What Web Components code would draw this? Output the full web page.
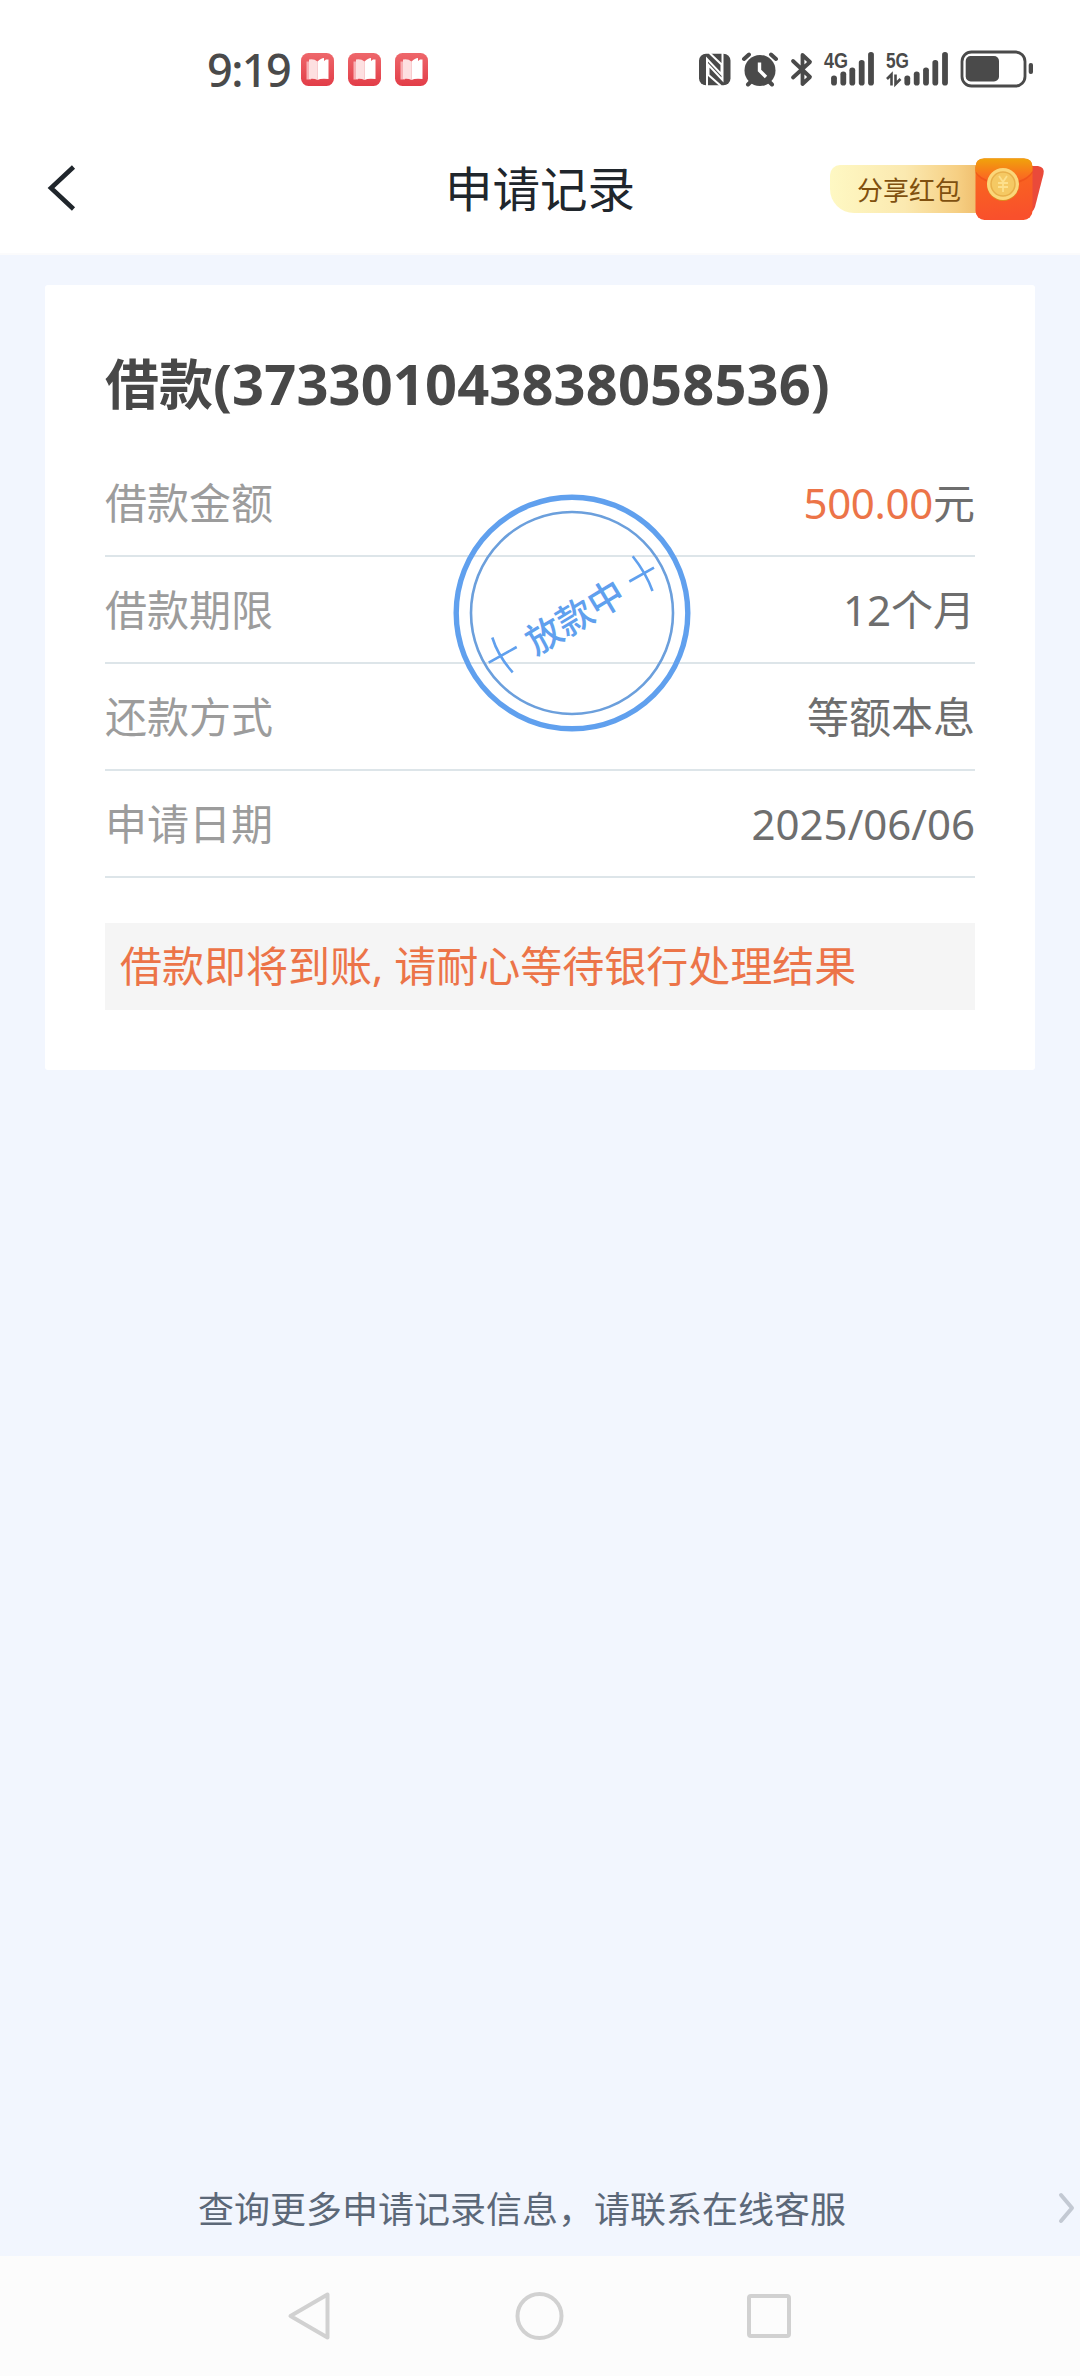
<!DOCTYPE html>
<html lang="zh-CN">
<head>
<meta charset="utf-8">
<meta name="viewport" content="width=device-width">
<title>申请记录</title>
<style>
html,body{margin:0;height:100%;background:#f2f6fe}
body{font-family:"Noto Sans","Noto Sans CJK SC",sans-serif}
</style>
</head>
<body>
<record-page></record-page>
<script>
const define = (name, html) => customElements.define(name, class extends HTMLElement {
  constructor() {
    super();
    const t = document.createElement('template');
    t.innerHTML = `<style>*{box-sizing:border-box}svg{display:block;flex:none}</style>` + html;
    this.attachShadow({mode: 'open'}).append(t.content.cloneNode(true));
  }
});

define('book-badge', `<style>:host{display:block;width:33px;height:33px}</style>
<svg width="33" height="33" viewBox="0 0 33 33">
<defs><linearGradient id="r" x2="0" y2="1"><stop stop-color="#ee676b"/><stop offset="1" stop-color="#e23d48"/></linearGradient></defs>
<rect width="33" height="33" rx="7.5" fill="url(#r)"/>
<path d="M5.500 8.500H10V26.500H5.500Z" fill="#f8b0b4"/><path d="M8 6.500Q13 5.500 16.500 8.500V27Q13 25 8 26Z" fill="#fde0e1"/>
<path d="M16.500 8.500Q20 5 23 5V8L25 6.500V6.500Q27 6.300 27.500 6.500V26Q20 25 16.500 27Z" fill="#fff"/>
</svg>`);

const bars = (xs) => xs.map((x, i) => {
  const y = [25.500, 21.500, 17.500, 10, 2][i];
  return `<rect x="${x - 2.900}" y="${y}" width="5.800" height="${35.500 - y}" rx="2.800"/>`;
}).join('');

define('status-bar', `<style>
:host{display:flex;height:120px;padding:50px 47px 0 207px;align-items:flex-start;color:#4a4a4a;background:#fff}
.time{font:500 45px/42px "Noto Sans",sans-serif;letter-spacing:-1.600px;width:94px;height:42px;margin-top:-1px;white-space:nowrap}
.badges{display:flex;gap:14px;margin-top:3px}
.tray{margin-left:auto;display:flex}
.signal{margin-top:-10px}
text{font:700 22px "Liberation Sans",sans-serif}
</style>
<div class="time">9:19</div>
<div class="badges"><book-badge></book-badge><book-badge></book-badge><book-badge></book-badge></div>
<div class="tray">
<svg width="44" height="40" fill="#4a4a4a"><rect x="9" y="3.700" width="31.500" height="31.500" rx="7"/><g fill="none" stroke="#fff" stroke-width="2"><path d="M17 36V9L31.500 24.500V14.500L19.500 3M32.500 3V30L18.500 15V25L31 36" stroke-linejoin="miter"/></g></svg>
<svg width="44" height="40"><g stroke="#4a4a4a" stroke-linecap="round"><path d="M10 9L15 4.500M42 9L37 4.500M14 34.500l4-4M38 34.500l-4-4" stroke-width="4"/></g><circle cx="26" cy="20.500" r="15.500" fill="#4a4a4a"/><path d="M25.500 12.500V20.500L32 27" fill="none" stroke="#fff" stroke-width="3.400"/></svg>
<svg width="40" height="40" fill="none" stroke="#4a4a4a" stroke-width="3.800" stroke-linejoin="round" stroke-linecap="round"><path d="M15 11L32 27L24.500 34V5L32 12L15 27.500"/></svg>
<svg class="signal" width="62" height="50" viewBox="0 -10 62 50" fill="#4a4a4a"><text x="6" y="18" textLength="24" lengthAdjust="spacingAndGlyphs">4G</text><g>${bars([16, 25.300, 34.300, 43.700, 53])}</g></svg>
<svg class="signal" width="72" height="50" viewBox="0 -10 72 50" fill="#4a4a4a"><text x="6" y="18" textLength="23" lengthAdjust="spacingAndGlyphs">5G</text><path d="M7 29L11.500 24.500V35.500M15.500 24.500V34L20.500 29" fill="none" stroke="#4a4a4a" stroke-width="2.600"/><g>${bars([27.300, 36.700, 46, 55.300, 65])}</g></svg>
<svg width="81" height="40"><rect x="10" y="2" width="63" height="34" rx="9.500" fill="none" stroke="#4a4a4a" stroke-width="2.800"/><rect x="13.700" y="6" width="33.300" height="25.500" rx="5" fill="#4a4a4a"/><rect x="76.700" y="13" width="4.300" height="11" rx="2" fill="#4a4a4a"/></svg>
</div>`);

define('share-button', `<style>
:host{display:flex;align-items:center;height:64px}
.pill{width:150px;height:48px;padding-left:27px;border-radius:10px 0 0 24px;background:linear-gradient(90deg,#fef8c3,#fbe9b0 50%,#f6cf83 85%,#efbd6c);font:26px/48px "Noto Sans CJK SC",sans-serif;color:#80500f;white-space:nowrap}
svg{margin-left:-5px}
</style>
<div class="pill"><slot></slot></div>
<svg width="71" height="64" viewBox="0 0 71 64">
<defs><linearGradient id="e" x2=".1" y2="1"><stop stop-color="#f0a00c"/><stop offset=".3" stop-color="#f9651f"/><stop offset="1" stop-color="#f9502c"/></linearGradient>
<linearGradient id="f" x2="0" y2="1"><stop stop-color="#f0a30b"/><stop offset=".6" stop-color="#f9761c"/><stop offset="1" stop-color="#fa5c26"/></linearGradient></defs>
<path d="M52 9H63Q70 10 68.500 17L60 50Q58 56 52 56Z" fill="#ea4a3a"/>
<rect x="0.500" y="1.500" width="57" height="61.500" rx="9" fill="url(#e)"/>
<path d="M.5 16V10Q.5 1.500 9 1.500H49Q57.500 1.500 57.500 10V16Q53 23 43 26Q29 31 15 26Q4 22 .5 16Z" fill="#e64515" opacity=".45"/>
<path d="M.5 14V10Q.5 1.500 9 1.500H49Q57.500 1.500 57.500 10V14Q53 21 43 24Q29 29 15 24Q4 20 .5 14Z" fill="url(#f)"/>
<circle cx="28" cy="28" r="16" fill="#dd8c20"/><circle cx="28" cy="27" r="16" fill="#fbd77a"/><circle cx="28" cy="27" r="12" fill="#f5c963" stroke="#e8b04a" stroke-width="1.500"/>
<path d="M24 19L28 25L32 19M28 25V35M23 26H33M23 30H33" fill="none" stroke="#fde08c" stroke-width="1.800"/>
</svg>`);

define('page-header', `<style>
:host{display:grid;grid-template-columns:300px 1fr 300px;align-items:center;height:135px;background:#fff;border-bottom:2px solid #fbfbfc}
.back{padding:3px 0 0 44px}
h1{margin:0;text-align:center;font:400 47.500px/60px "Noto Sans CJK SC",sans-serif;color:#20262c}
.end{display:flex;justify-content:flex-end;padding:5px 34px 0 0}
</style>
<div class="back"><svg width="34" height="48" fill="none" stroke="#20262c" stroke-width="4.600"><path d="M29.500 3L7 24L29.500 45"/></svg></div>
<h1><slot></slot></h1>
<div class="end"><share-button>分享红包</share-button></div>`);

define('detail-row', `<style>
:host{display:flex;justify-content:space-between;height:107px;border-bottom:2px solid #dde5e9;font-size:42px;line-height:105px;color:#6e6e6e;white-space:nowrap}
.label{color:#9c9c9c}
::slotted(b){font-weight:400;color:#ec7448;letter-spacing:-.3px}
</style>
<span class="label"><slot name="label"></slot></span><span><slot></slot></span>`);

define('status-stamp', `<style>
:host{display:block;width:240px;height:240px}
text{font:500 36px "Noto Sans CJK SC",sans-serif}
</style>
<svg width="240" height="240" viewBox="0 0 240 240" fill="none" stroke="#60a0ee">
<circle cx="120" cy="120" r="115.800" stroke-width="5.400"/>
<circle cx="120" cy="120" r="101" stroke="#6b9fdc" stroke-width="2.600"/>
<path d="M180.700 63.300Q194 80 200.500 98M177.300 88.500L202 74.700M40.300 144.500Q46 163 60.700 179.300M36.700 169.700L64.700 154" stroke-width="2.600"/>
<text transform="translate(122.800 123.700) rotate(-31)" x="0" y="13.500" text-anchor="middle" fill="#60a0ee" stroke="none">放款中</text>
</svg>`);

define('loan-card', `<style>
:host{display:block;position:relative;margin:30px 45px 0;height:785px;padding:60px 60px 0;background:#fff;border-radius:3px}
h2{margin:0;height:105px;font:700 54px/74px "Noto Sans CJK SC",sans-serif;color:#484848;white-space:nowrap}
h2 span{font:700 56px/74px "Noto Sans",sans-serif;letter-spacing:.12px}
.notice{margin-top:45px;height:87px;background:#f5f5f5;padding-left:15px;font-size:42px;line-height:86px;color:#ec7448;white-space:nowrap}
status-stamp{position:absolute;left:406.700px;top:208.300px}
</style>
<h2>借款<span>(373301043838058536)</span></h2>
<detail-row><span slot="label">借款金额</span><b>500.00</b>元</detail-row>
<detail-row><span slot="label">借款期限</span>12个月</detail-row>
<detail-row><span slot="label">还款方式</span>等额本息</detail-row>
<detail-row><span slot="label">申请日期</span>2025/06/06</detail-row>
<div class="notice">借款即将到账, 请耐心等待银行处理结果</div>
<status-stamp></status-stamp>`);

define('service-link', `<style>
:host{display:flex;align-items:center;justify-content:space-between;height:96px;padding:0 3px 3px 198px;font:36px/60px "Noto Sans CJK SC",sans-serif;color:#5c6878}
svg{margin-top:3px}
</style>
<slot></slot>
<svg width="20" height="36" fill="none" stroke="#c3c9d3" stroke-width="4" stroke-linecap="round" stroke-linejoin="round"><path d="M4 5L15 18L4 31"/></svg>`);

define('system-nav', `<style>
:host{display:flex;align-items:center;height:120px;background:#fcfcfc;padding:0 287px 0 286px;justify-content:space-between}
</style>
<svg width="46" height="52" fill="none" stroke="#d1d1d1" stroke-width="4" stroke-linejoin="round"><path d="M41.500 4.500V47.500L4.500 26Z"/></svg>
<svg width="52" height="52" fill="none" stroke="#d1d1d1" stroke-width="4"><circle cx="26.500" cy="26" r="22"/></svg>
<svg width="48" height="52" fill="none" stroke="#d1d1d1" stroke-width="4"><rect x="4" y="6" width="40" height="40" rx="2"/></svg>`);

define('record-page', `<style>
:host{display:flex;flex-direction:column;width:1080px;height:2376px;background:#f2f6fe;overflow:hidden}
main{flex:1}
</style>
<status-bar></status-bar>
<page-header>申请记录</page-header>
<main><loan-card></loan-card></main>
<service-link>查询更多申请记录信息，请联系在线客服</service-link>
<system-nav></system-nav>`);
</script>
</body>
</html>
